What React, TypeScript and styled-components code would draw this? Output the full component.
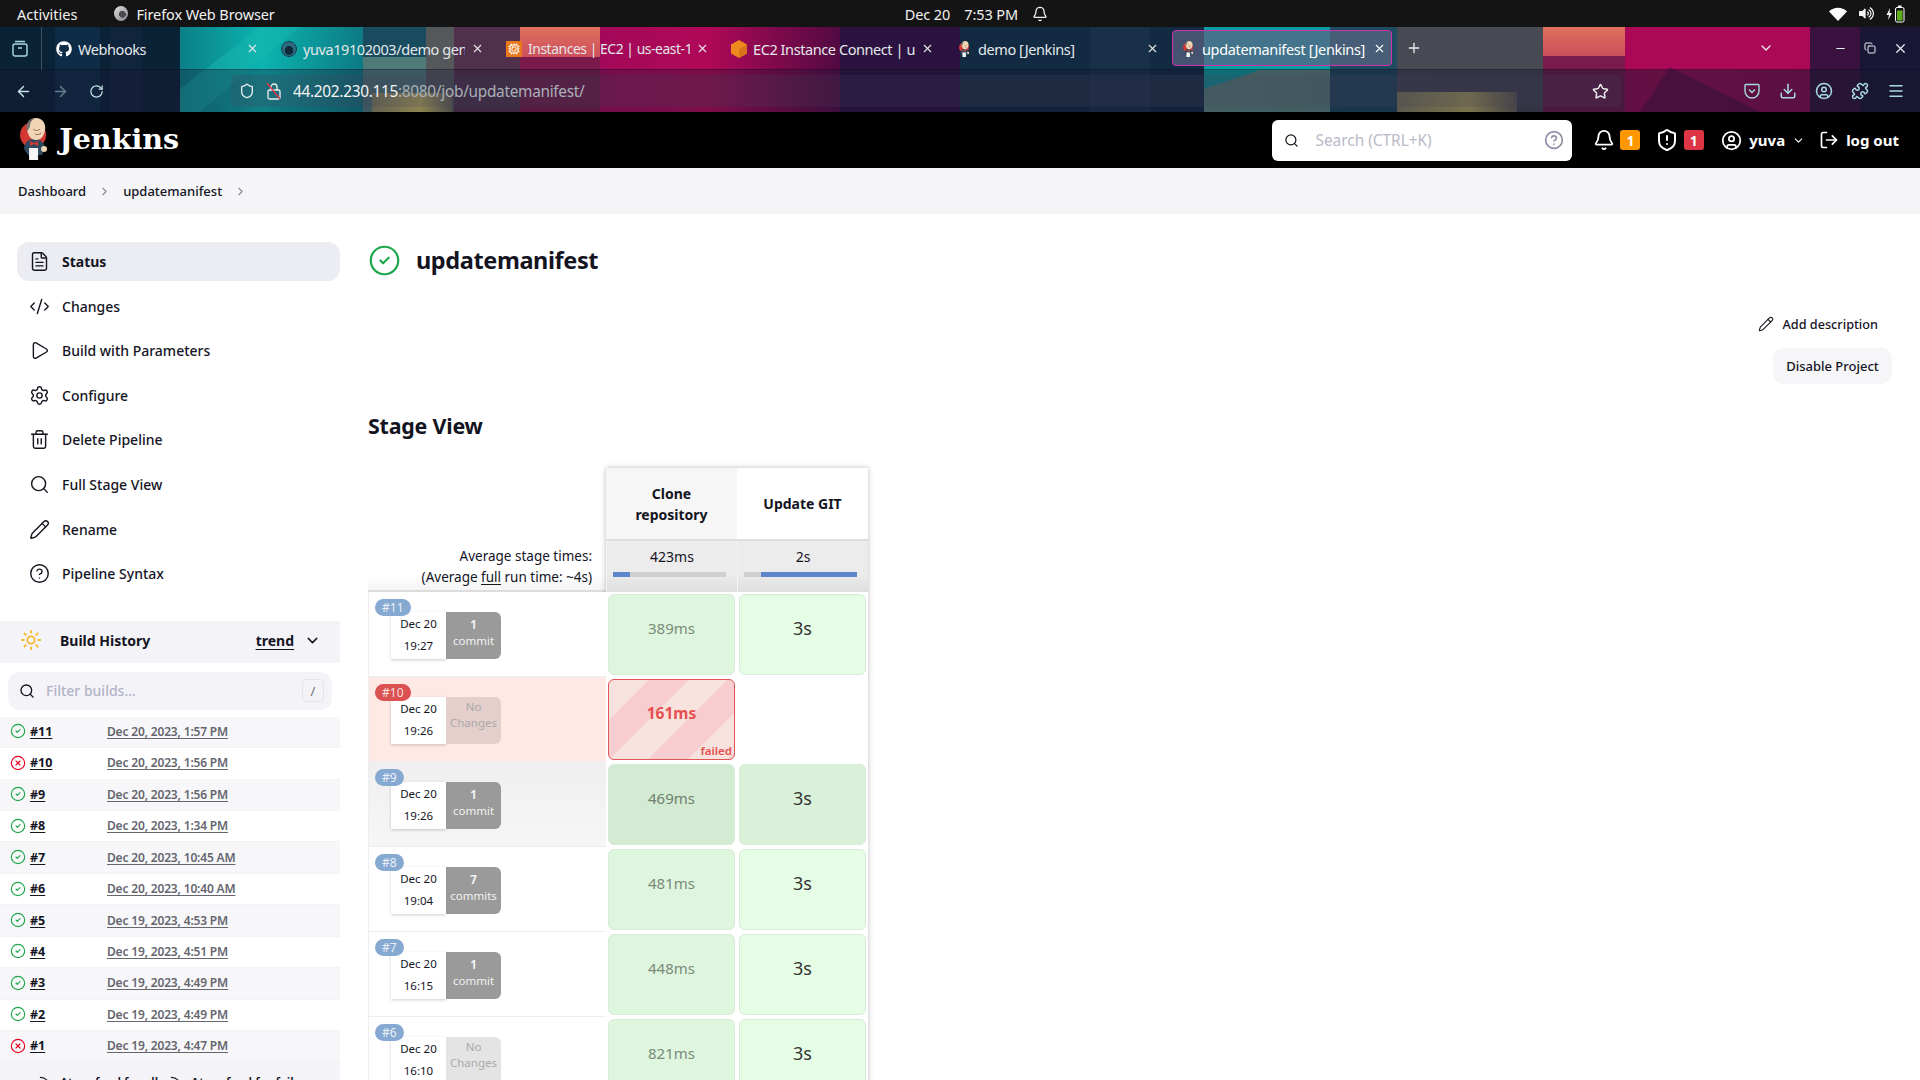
import React from 'react';
import styled, { createGlobalStyle } from 'styled-components';
import {
  ArrowLeft, ArrowRight, RotateCw, Shield, Star, Download, CircleUser, Puzzle, Menu, X, Plus,
  ChevronDown, ChevronRight, Minus, Copy, Search, CircleHelp, Bell, ShieldAlert, LogOut, FileText, CodeXml, Play,
  Settings, Trash2, Pencil, Sun, CircleCheck, CircleX, Rss, Cpu,
} from 'lucide-react';
import { FaGithub, FaVolumeUp } from 'react-icons/fa';

const GlobalStyle = createGlobalStyle`
  html, body {
    margin: 0;
    padding: 0;
    height: 1080px;
    overflow: hidden;
    background: #fff;
    font-family: "Noto Sans", "Open Sans", sans-serif;
    color: #14141f;
  }
  * { box-sizing: border-box; }
`;

const Page = styled.div`
  width: 1920px;
  height: 1080px;
  overflow: hidden;
  display: flex;
  flex-direction: column;
`;

const TopBar = styled.div`
  height: 27px;
  flex: none;
  background: #141414;
  color: #f2f2f2;
  display: flex;
  align-items: center;
  font-size: 14.5px;
  padding-left: 17px;
`;

const TopBarApp = styled.div`
  display: flex;
  align-items: center;
  gap: 8px;
  margin-left: 37px;
  letter-spacing: -0.1px;
`;

const FirefoxDot = styled.span`
  width: 14px;
  height: 15px;
  border-radius: 50%;
  background: radial-gradient(circle at 60% 55%, #4a4a50 0 28%, transparent 30%),
    linear-gradient(140deg, #e0e0e0, #85858d);
`;

const Clock = styled.div`
  display: flex;
  align-items: center;
  gap: 14px;
  margin-left: 630px;
  letter-spacing: -0.1px;
`;

const TopBarTray = styled.div`
  margin-left: auto;
  display: flex;
  align-items: center;
  gap: 12px;
  padding-right: 15px;
`;

const Wallpaper = styled.div`
  height: 85px;
  flex: none;
  display: flex;
  flex-direction: column;
  position: relative;
  color: #e8eef0;
  background: #0a2236;
`;

const WallpaperArt = styled.svg`
  position: absolute;
  inset: 0;
`;

const TabStrip = styled.div`
  height: 43px;
  display: flex;
  align-items: center;
  padding-left: 12px;
  position: relative;
  border-bottom: 1px solid rgba(10, 10, 30, 0.5);
`;

const WindowIcon = styled.span`
  width: 30px;
  height: 43px;
  margin-right: 5px;
  display: flex;
  align-items: center;
  color: #a8dbe0;
  border-right: 1px solid rgba(255, 255, 255, 0.22);
`;

const Tab = styled.div<{ $active?: boolean; $width?: number }>`
  width: ${p => p.$width ?? 225}px;
  height: 36px;
  flex: none;
  display: flex;
  align-items: center;
  gap: 6px;
  padding: 1px ${p => (p.$active ? 5 : 12)}px 0 ${p => (p.$active ? 7 : 8)}px;
  font-size: 14.5px;
  letter-spacing: ${p => (p.$active ? -0.34 : -0.42)}px;
  border-radius: 4px;
  border: 1px solid ${p => (p.$active ? '#d02fb2' : 'transparent')};
  background: ${p => (p.$active ? 'rgba(90, 100, 130, 0.72)' : 'transparent')};
  color: ${p => (p.$active ? '#fff' : '#e4e8ea')};
`;

const TabIcon = styled.span`
  width: 16px;
  flex: none;
  display: flex;
  justify-content: center;
`;

const TabTitle = styled.span<{ $tight?: boolean }>`
  flex: 1;
  min-width: 0;
  overflow: hidden;
  white-space: nowrap;
  ${p => p.$tight && 'font-size: 13.8px; letter-spacing: -0.4px;'}
`;

const AwsSquare = styled.span`
  width: 16px;
  height: 16px;
  flex: none;
  background: #e8781a;
  color: #fff;
  display: flex;
  align-items: center;
  justify-content: center;
`;

const RepoAvatar = styled.span`
  width: 16px;
  height: 16px;
  flex: none;
  border-radius: 50%;
  background: radial-gradient(circle at 50% 60%, #0e2a3a 0 38%, #2d6a80 42%);
  border: 1px solid #173c4e;
`;

const WindowControls = styled.div`
  margin-left: auto;
  display: flex;
  align-items: center;
  gap: 17px;
  padding-right: 12px;
`;

const NavBar = styled.div`
  flex: 1;
  display: flex;
  align-items: center;
  padding-left: 15px;
  position: relative;
  background: linear-gradient(90deg, rgba(24, 22, 48, 0.34) 60%, rgba(24, 22, 48, 0.58));
`;

const NavButtons = styled.div`
  display: flex;
  align-items: center;
  gap: 20px;
  color: #c4e4e8;
`;

const UrlBar = styled.div`
  width: 1390px;
  height: 32px;
  margin-left: 127px;
  display: flex;
  align-items: center;
  gap: 11px;
  font-size: 15.4px;
  letter-spacing: -0.3px;
  border-radius: 4px;
  padding: 0 12px 0 8px;
  background: rgba(70, 70, 92, 0.22);
`;

const UrlText = styled.span`
  color: #a9b0b8;
  b {
    color: #f5f5f5;
    font-weight: 400;
  }
`;

const UrlStar = styled.span`
  margin-left: auto;
  display: flex;
`;

const NavTools = styled.div`
  display: flex;
  align-items: center;
  gap: 18px;
  margin-left: 122px;
  color: #a8dbe0;
`;

const JenkinsHeader = styled.header`
  height: 56px;
  flex: none;
  background: #000;
  color: #fff;
  display: flex;
  align-items: center;
  padding: 0 21px 0 20px;
`;

const Brand = styled.div`
  font-family: "DejaVu Serif", serif;
  font-weight: 700;
  font-size: 28.6px;
  display: flex;
  align-items: center;
  gap: 11px;
  padding-bottom: 2px;
`;

const SearchBox = styled.div`
  margin-left: auto;
  width: 300px;
  height: 41px;
  background: #fff;
  border-radius: 6px;
  display: flex;
  align-items: center;
  padding: 0 8px 0 12px;
  gap: 16px;
  color: #14141f;
`;

const SearchHint = styled.span`
  flex: 1;
  color: #b9b9c9;
  font-size: 15.4px;
`;

const HeaderItem = styled.div<{ $gap?: number; $left: number }>`
  display: flex;
  align-items: center;
  gap: ${p => p.$gap ?? 8}px;
  margin-left: ${p => p.$left}px;
  font-size: 15px;
  font-weight: 700;
`;

const CountBadge = styled.span<{ $color: string }>`
  width: 20px;
  height: 20px;
  border-radius: 3px;
  background: ${p => p.$color};
  font-size: 14px;
  font-weight: 700;
  display: flex;
  align-items: center;
  justify-content: center;
`;

const Breadcrumbs = styled.nav`
  height: 46px;
  flex: none;
  background: #f5f5f8;
  display: flex;
  align-items: center;
  padding-left: 18px;
  gap: 12px;
  font-size: 13px;
  font-weight: 500;
  color: #14141f;
`;

const Main = styled.main`
  flex: 1;
  min-height: 0;
  display: flex;
  overflow: hidden;
`;

const Sidebar = styled.aside`
  width: 340px;
  flex: none;
  padding-top: 28px;
`;

const TaskList = styled.div`
  display: flex;
  flex-direction: column;
  gap: 5.6px;
  padding-left: 17px;
`;

const Task = styled.div<{ $active?: boolean }>`
  height: 39px;
  display: flex;
  align-items: center;
  gap: 12px;
  padding-left: 12px;
  font-size: 14px;
  font-weight: ${p => (p.$active ? 700 : 500)};
  background: ${p => (p.$active ? '#ecedf2' : 'transparent')};
  border-radius: 12px;
`;

const BuildHead = styled.div`
  height: 42px;
  margin-top: 28px;
  background: #f3f3f8;
  display: flex;
  align-items: center;
  padding: 0 19px 4px 20px;
  font-size: 14px;
  font-weight: 700;
`;

const BuildTitle = styled.span`
  margin-left: 18px;
`;

const Trend = styled.span`
  margin-left: auto;
  margin-right: 10px;
  text-decoration: underline;
  text-underline-offset: 3px;
`;

const Filter = styled.div`
  height: 38px;
  margin: 8.5px 8px 7px;
  background: #f4f4f8;
  border-radius: 12px;
  display: flex;
  align-items: center;
  padding: 0 8px 0 11px;
  gap: 11px;
`;

const FilterHint = styled.span`
  flex: 1;
  color: #b2b2c6;
  font-size: 14px;
  font-weight: 500;
`;

const KeyCap = styled.span`
  width: 22px;
  height: 23px;
  border: 1px solid #e4e4ec;
  border-radius: 4px;
  color: #6b6b76;
  font-size: 13px;
  display: flex;
  align-items: center;
  justify-content: center;
`;

const BuildRow = styled.div<{ $odd: boolean }>`
  height: 31.45px;
  display: flex;
  align-items: center;
  padding: 0 0 1px 10px;
  background: ${p => (p.$odd ? '#f7f7f9' : '#fff')};
  border-bottom: 1px solid #f3f3f5;
`;

const BuildIcon = styled.span<{ $ok: boolean }>`
  width: 16px;
  display: flex;
  color: ${p => (p.$ok ? '#1ea64b' : '#e6001f')};
`;

const BuildNumber = styled.span`
  width: 81px;
  padding-left: 4px;
  font-size: 12.5px;
  font-weight: 700;
  text-decoration: underline;
  text-underline-offset: 2px;
`;

const BuildDate = styled.span`
  font-size: 12px;
  font-weight: 600;
  letter-spacing: -0.17px;
  color: #66666f;
  text-decoration: underline;
  text-underline-offset: 2px;
`;

const FeedLinks = styled.div`
  height: 30px;
  background: #f3f3f8;
  display: flex;
  gap: 11px;
  padding: 12px 0 0 38px;
  font-size: 12px;
  font-weight: 600;
`;

const FeedLink = styled.span`
  display: flex;
  align-items: center;
  gap: 8px;
  height: 16px;
`;

const Content = styled.section`
  flex: 1;
  min-width: 0;
  display: flex;
  flex-direction: column;
  padding: 31px 28px 0;
`;

const TitleRow = styled.div`
  height: 30px;
  display: flex;
  align-items: center;
  gap: 15px;
  color: #1ea64b;
`;

const JobTitle = styled.h1`
  margin: 0;
  font-size: 23.5px;
  font-weight: 700;
  letter-spacing: -0.4px;
  color: #14141f;
`;

const Actions = styled.div`
  margin-top: 37px;
  display: flex;
  flex-direction: column;
  align-items: flex-end;
  gap: 12px;
`;

const AddDescription = styled.div`
  height: 24px;
  display: flex;
  align-items: center;
  gap: 8px;
  font-size: 12.7px;
  font-weight: 500;
  padding-right: 14px;
`;

const DisableButton = styled.button`
  width: 119px;
  height: 36px;
  border: none;
  border-radius: 10px;
  background: #f6f6f9;
  color: #14141f;
  font-family: inherit;
  font-size: 13px;
  font-weight: 500;
  padding: 0;
`;

const StageHeading = styled.h2`
  margin: 28px 0 0;
  height: 28px;
  font-size: 21.4px;
  font-weight: 700;
  line-height: 28px;
  letter-spacing: -0.2px;
`;

const StageTable = styled.div`
  margin-top: 28px;
  display: flex;
  align-items: flex-start;
`;

const RunColumn = styled.div`
  width: 238px;
  flex: none;
  padding-top: 71px;
`;

const AverageLabel = styled.div`
  height: 53px;
  text-align: right;
  padding: 7px 14px 0 0;
  font-size: 13.5px;
  line-height: 21px;
  border-bottom: 2px solid #dcdcdc;
  background: linear-gradient(180deg, #fff 70%, #f4f4f4);
  u {
    text-underline-offset: 2px;
  }
`;

const RunRow = styled.div<{ $state?: 'failed' | 'hover' }>`
  height: 85px;
  display: flex;
  align-items: flex-start;
  position: relative;
  padding: 20px 0 0 22px;
  border: 1px solid #eeeeee;
  border-top: none;
  border-right: none;
  background: ${p =>
    p.$state === 'failed' ? '#ffe9e5' : p.$state === 'hover' ? 'linear-gradient(180deg, #efefef, #f6f6f6)' : '#fff'};
`;

const RunBadge = styled.span<{ $failed?: boolean }>`
  position: absolute;
  left: 6px;
  top: 7px;
  height: 17px;
  padding: 0 7px;
  border-radius: 9px;
  background: ${p => (p.$failed ? '#db5050' : '#86a9d2')};
  color: rgba(255, 255, 255, 0.85);
  font-size: 12px;
  line-height: 17px;
  z-index: 1;
`;

const RunDate = styled.div`
  width: 55px;
  height: 47px;
  background: #fff;
  box-shadow: 0 1px 3px rgba(0, 0, 0, 0.2);
  font-size: 11.5px;
  line-height: 22px;
  text-align: center;
  padding-top: 1px;
`;

const CommitBox = styled.div<{ $empty?: boolean; $failed?: boolean }>`
  width: 55px;
  height: 47px;
  border-radius: 0 6px 6px 0;
  background: ${p => (p.$failed ? '#e4cfcc' : p.$empty ? '#e4e4e4' : '#9a9a9a')};
  color: ${p => (p.$empty ? '#a9a9a9' : '#f2f2f2')};
  font-size: 11.5px;
  line-height: 16px;
  text-align: center;
  padding-top: ${p => (p.$empty ? 2 : 5)}px;
  strong {
    display: block;
  }
`;

const StageColumns = styled.div`
  width: 262px;
  flex: none;
  display: grid;
  grid-template-columns: 131px 131px;
  grid-auto-rows: 85px;
  grid-template-rows: 71px 53px;
  box-shadow: 0 0 5px rgba(0, 0, 0, 0.28);
  background: #fff;
`;

const StageHead = styled.div<{ $shade?: boolean }>`
  background: ${p => (p.$shade ? '#f6f6f6' : '#fff')};
  font-size: 14px;
  font-weight: 700;
  line-height: 21px;
  text-align: center;
  display: flex;
  align-items: center;
  justify-content: center;
  padding: 0 24px;
`;

const StageAverage = styled.div`
  border-top: 2px solid #dedede;
  border-left: 1px solid #f4f4f4;
  background: linear-gradient(180deg, #ececec 65%, #dedede);
  text-align: center;
  font-size: 14px;
  line-height: 20px;
  padding-top: 6px;
`;

const Bar = styled.div`
  height: 5px;
  margin: 5px 11px 0 6px;
  background: #cfcfcf;
`;

const BarFill = styled.div`
  height: 5px;
  background: #5f86cc;
`;

const StageCell = styled.div<{ $tone?: 'clone' | 'git' | 'failed' | 'hoverClone' | 'hoverGit' }>`
  margin: 2px;
  border-radius: 6px;
  display: flex;
  align-items: center;
  justify-content: center;
  padding-bottom: 14px;
  position: relative;
  border: 1px solid ${p => (p.$tone === 'failed' ? '#e05555' : '#d8ead8')};
  ${p => {
    switch (p.$tone) {
      case 'failed':
        return `
          background: repeating-linear-gradient(135deg, #f8e2de 0 28px, #f7cdd0 28px 56px);
          color: #e64f4f;
          font-size: 15.5px;
          font-weight: 700;
        `;
      case 'hoverClone':
        return 'background: #d2ebd2; color: #708070; font-size: 15px;';
      case 'hoverGit':
        return 'background: #d9f1d9; color: #333; font-size: 18px;';
      case 'clone':
        return 'background: #def6de; color: #7b8a7b; font-size: 15px;';
      default:
        return 'background: #e5fde5; color: #333; font-size: 18px;';
    }
  }}
`;

const FailedTag = styled.span`
  position: absolute;
  right: 2px;
  bottom: 1px;
  font-size: 11.5px;
  font-weight: 600;
`;

const EmptyCell = styled.div`
  background: #fff;
`;

const JenkinsMark: React.FC<{ size: number }> = ({ size }) => (
  <svg width={size * 0.67} height={size} viewBox="0 0 28 42">
    <circle cx="13" cy="17" r="13" fill="#d33833" />
    <path d="M4 31c0-6 4-10 10-10s10 3 11 9l-3 7H8z" fill="#2f4a5e" />
    <path d="M7 12C6 5 10 0 16 0s10 5 9 12c-1 6-4 10-9 10s-8-4-9-10z" fill="#f0d6b7" />
    <path d="M7 13C5 6 9 0 15 0c-3 2-5 4-5 7 0 2-1 4-3 6z" fill="#77706b" />
    <path d="M13 11c2 2 5 2 7 0M15 16c2 1 4 1 6-1" stroke="#8a6a50" strokeWidth="1" fill="none" />
    <path d="M10 23l4 2 4-2v5l-4-2-4 2z" fill="#d33833" />
    <rect x="9" y="30" width="9" height="12" fill="#f6f6f6" />
    <circle cx="24" cy="31" r="3" fill="#f0d6b7" />
  </svg>
);

const PocketIcon = () => (
  <svg width="18" height="18" viewBox="0 0 18 18" fill="none" stroke="currentColor" strokeWidth="1.4">
    <path d="M2 3.5a1 1 0 0 1 1-1h12a1 1 0 0 1 1 1V9a7 7 0 0 1-14 0z" />
    <path d="M6 7.5l3 3 3-3" />
  </svg>
);

const ViewIcon = () => (
  <svg width="16" height="18" viewBox="0 0 16 18" fill="none" stroke="currentColor" strokeWidth="1.4">
    <rect x="1" y="5" width="14" height="12" rx="2" />
    <path d="M3 2.5h10M6 9h4" />
  </svg>
);

const SlashedLock = () => (
  <svg width="16" height="18" viewBox="0 0 16 18" fill="none" stroke="#f0f0f0" strokeWidth="1.3">
    <rect x="2" y="8" width="12" height="9" rx="1.5" />
    <path d="M5 8V5a3 3 0 0 1 6 0v3" />
    <path d="M1 1l13 16" stroke="#e0364f" />
  </svg>
);

const WifiWedge = () => (
  <svg width="18" height="14" viewBox="0 0 18 14">
    <path d="M0 4.5C5-.5 13-.5 18 4.5L9 14z" fill="#fff" />
  </svg>
);

const Battery = () => (
  <svg width="19" height="18" viewBox="0 0 19 18">
    <path d="M4 3L0.5 10h2.5L2 15l4-7H3.5z" fill="#fff" />
    <rect x="9.5" y="2.5" width="8.5" height="14.5" rx="1.5" fill="none" stroke="#fff" />
    <rect x="12" y="0.5" width="3.5" height="2" fill="#fff" />
    <rect x="11" y="5.5" width="5.5" height="10" fill="#5fae1e" />
  </svg>
);

const HexIcon = () => (
  <svg width="16" height="18" viewBox="0 0 16 18">
    <path d="M8 0l8 4.5v9L8 18l-8-4.5v-9z" fill="#ee8a1e" />
    <path d="M8 9l8-4.5v9L8 18z" fill="#d9731a" />
  </svg>
);

const WallpaperDrawing = () => (
  <WallpaperArt width="1920" height="85" viewBox="0 0 1920 85">
    <defs>
      <linearGradient id="tealLeft" x1="0" x2="1">
        <stop offset="0" stopColor="#0b7f88" />
        <stop offset="0.45" stopColor="#0cb4b0" />
        <stop offset="1" stopColor="#0d7a84" />
      </linearGradient>
      <linearGradient id="salmon" x1="0" x2="0" y1="0" y2="1">
        <stop offset="0" stopColor="#e0705e" />
        <stop offset="1" stopColor="#cc4f5c" />
      </linearGradient>
      <linearGradient id="magenta" x1="0" x2="1">
        <stop offset="0" stopColor="#a4085a" />
        <stop offset="0.45" stopColor="#b00858" />
        <stop offset="1" stopColor="#520a42" />
      </linearGradient>
      <linearGradient id="olive" x1="0" x2="1">
        <stop offset="0" stopColor="#8c8a62" />
        <stop offset="0.6" stopColor="#c8bc62" />
        <stop offset="1" stopColor="#6c6a58" />
      </linearGradient>
    </defs>
    <rect x="55" width="45" height="85" fill="#0e2c46" />
    <rect x="110" width="32" height="85" fill="#10243c" />
    <rect x="180" width="183" height="85" fill="url(#tealLeft)" />
    <polygon points="180,85 180,62 260,0 300,0 200,85" fill="#18b8b2" opacity="0.45" />
    <rect x="363" width="63" height="30" fill="#1a4c60" />
    <rect x="363" y="30" width="63" height="55" fill="#4f7a78" />
    <rect x="426" width="28" height="85" fill="#54585a" />
    <rect x="454" width="66" height="85" fill="#50304a" />
    <rect x="372" y="66" width="80" height="19" fill="url(#olive)" />
    <rect x="600" width="240" height="85" fill="url(#magenta)" />
    <rect x="520" y="30" width="80" height="55" fill="#7a1a4a" />
    <rect x="520" width="80" height="30" fill="url(#salmon)" />
    <rect x="840" width="120" height="85" fill="#2c1240" />
    <rect x="960" width="244" height="85" fill="#122a42" />
    <rect x="1090" width="60" height="85" fill="#183048" />
    <rect x="1204" width="126" height="85" fill="#0a9ea0" />
    <polygon points="1204,85 1204,62 1260,43 1330,43 1330,85" fill="#5e8a80" />
    <rect x="1330" width="67" height="85" fill="#1c4c5e" />
    <rect x="1397" width="146" height="85" fill="#474a52" />
    <rect x="1397" y="65" width="120" height="20" fill="url(#olive)" />
    <rect x="1543" width="82" height="85" fill="#7a1a4e" />
    <rect x="1543" width="82" height="29" fill="url(#salmon)" />
    <rect x="1625" width="185" height="85" fill="#ac0858" />
    <polygon points="1640,85 1670,40 1760,85" fill="#7a0a4c" />
    <rect x="1810" width="110" height="85" fill="#3a1240" />
    <rect x="1860" width="60" height="85" fill="#1a1636" />
  </WallpaperArt>
);

const tasks = [
  { label: 'Status', icon: FileText },
  { label: 'Changes', icon: CodeXml },
  { label: 'Build with Parameters', icon: Play },
  { label: 'Configure', icon: Settings },
  { label: 'Delete Pipeline', icon: Trash2 },
  { label: 'Full Stage View', icon: Search },
  { label: 'Rename', icon: Pencil },
  { label: 'Pipeline Syntax', icon: CircleHelp },
];

const builds = [
  { n: 11, date: 'Dec 20, 2023, 1:57 PM', ok: true },
  { n: 10, date: 'Dec 20, 2023, 1:56 PM', ok: false },
  { n: 9, date: 'Dec 20, 2023, 1:56 PM', ok: true },
  { n: 8, date: 'Dec 20, 2023, 1:34 PM', ok: true },
  { n: 7, date: 'Dec 20, 2023, 10:45 AM', ok: true },
  { n: 6, date: 'Dec 20, 2023, 10:40 AM', ok: true },
  { n: 5, date: 'Dec 19, 2023, 4:53 PM', ok: true },
  { n: 4, date: 'Dec 19, 2023, 4:51 PM', ok: true },
  { n: 3, date: 'Dec 19, 2023, 4:49 PM', ok: true },
  { n: 2, date: 'Dec 19, 2023, 4:49 PM', ok: true },
  { n: 1, date: 'Dec 19, 2023, 4:47 PM', ok: false },
];

const runs = [
  { n: 11, day: 'Dec 20', time: '19:27', commits: '1', unit: 'commit', clone: '389ms', git: '3s' },
  { n: 10, day: 'Dec 20', time: '19:26', commits: '', unit: '', clone: '161ms', git: '', state: 'failed' as const },
  { n: 9, day: 'Dec 20', time: '19:26', commits: '1', unit: 'commit', clone: '469ms', git: '3s', state: 'hover' as const },
  { n: 8, day: 'Dec 20', time: '19:04', commits: '7', unit: 'commits', clone: '481ms', git: '3s' },
  { n: 7, day: 'Dec 20', time: '16:15', commits: '1', unit: 'commit', clone: '448ms', git: '3s' },
  { n: 6, day: 'Dec 20', time: '16:10', commits: '', unit: '', clone: '821ms', git: '3s' },
];

const browserTabs = [
  { title: 'Webhooks', icon: <FaGithub size={16} color="#fff" /> },
  { title: 'yuva19102003/demo gen', icon: <RepoAvatar /> },
  { title: 'Instances | EC2 | us-east-1', icon: <AwsSquare><Cpu size={12} /></AwsSquare>, tight: true },
  { title: 'EC2 Instance Connect | us', icon: <HexIcon /> },
  { title: 'demo [Jenkins]', icon: <JenkinsMark size={16} /> },
];

export default function App() {
  return (
    <Page>
      <GlobalStyle />
      <TopBar>
        Activities
        <TopBarApp>
          <FirefoxDot />
          Firefox Web Browser
        </TopBarApp>
        <Clock>
          <span>Dec 20</span>
          <span>7:53 PM</span>
          <Bell size={16} />
        </Clock>
        <TopBarTray>
          <WifiWedge />
          <FaVolumeUp size={15} />
          <Battery />
        </TopBarTray>
      </TopBar>

      <Wallpaper>
        <WallpaperDrawing />
        <TabStrip>
          <WindowIcon>
            <ViewIcon />
          </WindowIcon>
          {browserTabs.map(tab => (
            <Tab key={tab.title}>
              <TabIcon>{tab.icon}</TabIcon>
              <TabTitle $tight={tab.tight}>{tab.title}</TabTitle>
              <X size={13} />
            </Tab>
          ))}
          <Tab $active $width={220}>
            <TabIcon>
              <JenkinsMark size={16} />
            </TabIcon>
            <TabTitle>updatemanifest [Jenkins]</TabTitle>
            <X size={13} />
          </Tab>
          <Plus size={16} style={{ marginLeft: 14 }} />
          <WindowControls>
            <ChevronDown size={16} style={{ marginRight: 43 }} />
            <Minus size={13} />
            <Copy size={12} />
            <X size={15} />
          </WindowControls>
        </TabStrip>
        <NavBar>
          <NavButtons>
            <ArrowLeft size={17} />
            <ArrowRight size={17} color="#66808c" />
            <RotateCw size={15} />
          </NavButtons>
          <UrlBar>
            <Shield size={16} />
            <SlashedLock />
            <UrlText>
              <b>44.202.230.115</b>:8080/job/updatemanifest/
            </UrlText>
            <UrlStar>
              <Star size={17} color="#f0f0f0" />
            </UrlStar>
          </UrlBar>
          <NavTools>
            <PocketIcon />
            <Download size={18} />
            <CircleUser size={18} />
            <Puzzle size={18} />
            <Menu size={18} />
          </NavTools>
        </NavBar>
      </Wallpaper>

      <JenkinsHeader>
        <Brand>
          <JenkinsMark size={42} />
          Jenkins
        </Brand>
        <SearchBox>
          <Search size={15} />
          <SearchHint>Search (CTRL+K)</SearchHint>
          <CircleHelp size={20} color="#8e8ea6" />
        </SearchBox>
        <HeaderItem $left={20.5} $gap={5.5}>
          <Bell size={22} />
          <CountBadge $color="#ff9800">1</CountBadge>
        </HeaderItem>
        <HeaderItem $left={15} $gap={4.4}>
          <ShieldAlert size={24} />
          <CountBadge $color="#dc3545">1</CountBadge>
        </HeaderItem>
        <HeaderItem $left={17.4} $gap={7}>
          <CircleUser size={21} />
          yuva
          <ChevronDown size={13} />
        </HeaderItem>
        <HeaderItem $left={14} $gap={7}>
          <LogOut size={20} />
          log out
        </HeaderItem>
      </JenkinsHeader>

      <Breadcrumbs>
        Dashboard
        <ChevronRight size={13} color="#8a8a94" />
        updatemanifest
        <ChevronRight size={13} color="#8a8a94" />
      </Breadcrumbs>

      <Main>
        <Sidebar>
          <TaskList>
            {tasks.map((task, i) => (
              <Task key={task.label} $active={i === 0}>
                <task.icon size={21} strokeWidth={1.6} />
                {task.label}
              </Task>
            ))}
          </TaskList>
          <BuildHead>
            <Sun size={22} color="#f7b731" strokeWidth={2} />
            <BuildTitle>Build History</BuildTitle>
            <Trend>trend</Trend>
            <ChevronDown size={17} />
          </BuildHead>
          <Filter>
            <Search size={16} />
            <FilterHint>Filter builds...</FilterHint>
            <KeyCap>/</KeyCap>
          </Filter>
          {builds.map((build, i) => (
            <BuildRow key={build.n} $odd={i % 2 === 0}>
              <BuildIcon $ok={build.ok}>
                {build.ok ? <CircleCheck size={16} strokeWidth={1.7} /> : <CircleX size={16} strokeWidth={1.7} />}
              </BuildIcon>
              <BuildNumber>#{build.n}</BuildNumber>
              <BuildDate>{build.date}</BuildDate>
            </BuildRow>
          ))}
          <FeedLinks>
            <FeedLink>
              <Rss size={14} />
              Atom feed for all
            </FeedLink>
            <FeedLink>
              <Rss size={14} />
              Atom feed for failures
            </FeedLink>
          </FeedLinks>
        </Sidebar>

        <Content>
          <TitleRow>
            <CircleCheck size={33} strokeWidth={1.6} />
            <JobTitle>updatemanifest</JobTitle>
          </TitleRow>
          <Actions>
            <AddDescription>
              <Pencil size={16} strokeWidth={1.6} />
              Add description
            </AddDescription>
            <DisableButton>Disable Project</DisableButton>
          </Actions>
          <StageHeading>Stage View</StageHeading>
          <StageTable>
            <RunColumn>
              <AverageLabel>
                Average stage times:
                <br />
                (Average <u>full</u> run time: ~4s)
              </AverageLabel>
              {runs.map(run => (
                <RunRow key={run.n} $state={run.state}>
                  <RunBadge $failed={run.state === 'failed'}>#{run.n}</RunBadge>
                  <RunDate>
                    {run.day}
                    <br />
                    {run.time}
                  </RunDate>
                  <CommitBox $empty={!run.commits} $failed={run.state === 'failed'}>
                    {run.commits ? (
                      <>
                        <strong>{run.commits}</strong>
                        {run.unit}
                      </>
                    ) : (
                      <>
                        No
                        <br />
                        Changes
                      </>
                    )}
                  </CommitBox>
                </RunRow>
              ))}
            </RunColumn>
            <StageColumns>
              <StageHead $shade>Clone repository</StageHead>
              <StageHead>Update GIT</StageHead>
              <StageAverage>
                423ms
                <Bar>
                  <BarFill style={{ width: '15%' }} />
                </Bar>
              </StageAverage>
              <StageAverage>
                2s
                <Bar>
                  <BarFill style={{ width: '85%', marginLeft: '15%' }} />
                </Bar>
              </StageAverage>
              {runs.map(run => (
                <React.Fragment key={run.n}>
                  {run.state === 'failed' ? (
                    <StageCell $tone="failed">
                      {run.clone}
                      <FailedTag>failed</FailedTag>
                    </StageCell>
                  ) : (
                    <StageCell $tone={run.state === 'hover' ? 'hoverClone' : 'clone'}>{run.clone}</StageCell>
                  )}
                  {run.git ? (
                    <StageCell $tone={run.state === 'hover' ? 'hoverGit' : 'git'}>{run.git}</StageCell>
                  ) : (
                    <EmptyCell />
                  )}
                </React.Fragment>
              ))}
            </StageColumns>
          </StageTable>
        </Content>
      </Main>
    </Page>
  );
}
